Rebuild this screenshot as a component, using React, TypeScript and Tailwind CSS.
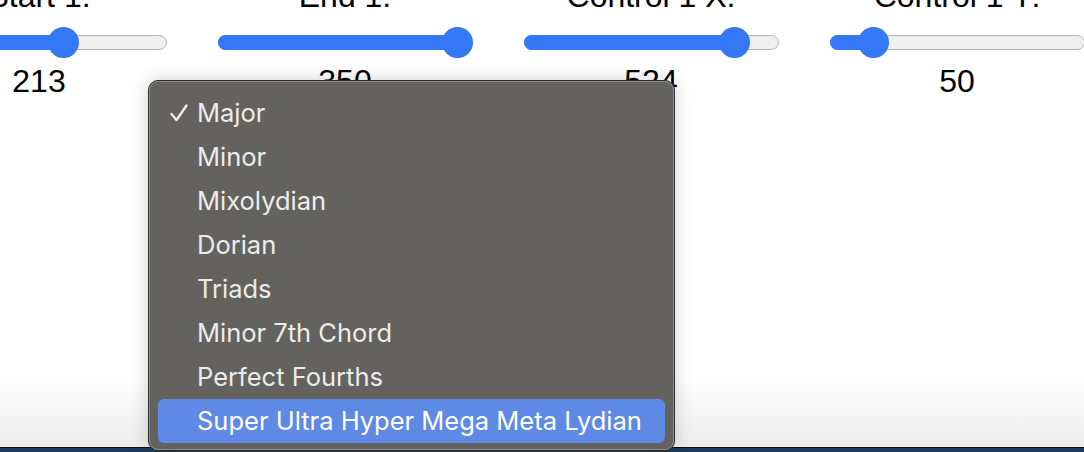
import React from 'react'

type Slider = { label: string; value: number; max: number }

const SLIDERS: Slider[] = [
  { label: 'Start 1:', value: 213, max: 350 },
  { label: 'End 1:', value: 350, max: 350 },
  { label: 'Control 1 X:', value: 524, max: 600 },
  { label: 'Control 1 Y:', value: 50, max: 400 },
]

const SCALES = [
  'Major',
  'Minor',
  'Mixolydian',
  'Dorian',
  'Triads',
  'Minor 7th Chord',
  'Perfect Fourths',
  'Super Ultra Hyper Mega Meta Lydian',
]

const TRACK_W = 255
const THUMB = 31

function Range({ value, max }: { value: number; max: number }) {
  const center = THUMB / 2 + (value / max) * (TRACK_W - THUMB)
  return (
    <div className="relative h-[31px] w-[255px]">
      <div className="absolute left-0 right-0 top-[8px] h-[15px] rounded-full border-[1.5px] border-[#b3b3b3] bg-[#efefef]" />
      <div
        className="absolute left-0 top-[8px] h-[15px] rounded-full bg-[#3478f6]"
        style={{ width: center + 4 }}
      />
      <div
        className="absolute top-0 h-[31px] w-[31px] rounded-full bg-[#3478f6]"
        style={{ left: center - THUMB / 2 }}
      />
    </div>
  )
}

function Check() {
  return (
    <svg width="20" height="20" viewBox="0 0 20 20" className="absolute left-[11px]">
      <path d="M2.5 11 L7.5 17 L17.5 2.5" fill="none" stroke="#ececec" strokeWidth="2.4" strokeLinecap="round" strokeLinejoin="round" />
    </svg>
  )
}

export default function App() {
  return (
    <div className="relative h-[452px] w-[1084px] overflow-hidden bg-white font-['Liberation_Sans',Arial,sans-serif] text-black">
      <div className="flex ml-[-114px]">
        {SLIDERS.map((s) => (
          <div key={s.label} className="flex w-[306px] shrink-0 flex-col items-center">
            <div className="mt-[-22px] text-[32px] leading-[36px]">{s.label}</div>
            <div className="mt-[13px]">
              <Range value={s.value} max={s.max} />
            </div>
            <div className="mt-[5px] text-[32px] leading-[36px]">{s.value}</div>
          </div>
        ))}
      </div>

      {/* page bottom fade */}
      <div className="absolute inset-x-0 bottom-[5px] h-[70px] bg-gradient-to-b from-white to-[#ececec]" />
      <div className="absolute inset-x-0 bottom-0 h-[5px] border-t border-[#111] bg-[#1d3b5c]" />

      {/* native select popup */}
      <div className="absolute left-[148px] top-[80px] h-[371px] w-[527px] rounded-[10px] border border-[#2e2e2e] bg-[#64625f] shadow-[0_0_18px_rgba(0,0,0,0.18)]">
        <div className="absolute inset-0 rounded-[9px] border border-[#8c8b89]" />
        <div className="relative flex flex-col px-[9px] pt-[10px] font-['Inter','Noto_Sans',sans-serif] text-[25.5px] text-[#ececec]">
          {SCALES.map((name, i) => {
            const active = i === SCALES.length - 1
            return (
              <div
                key={name}
                className={
                  'relative flex h-[44px] items-center rounded-[6px] pl-[39px] ' +
                  (active ? 'bg-[#5e8ae6] text-white' : '')
                }
              >
                {i === 0 && <Check />}
                {name}
              </div>
            )
          })}
        </div>
      </div>
    </div>
  )
}
